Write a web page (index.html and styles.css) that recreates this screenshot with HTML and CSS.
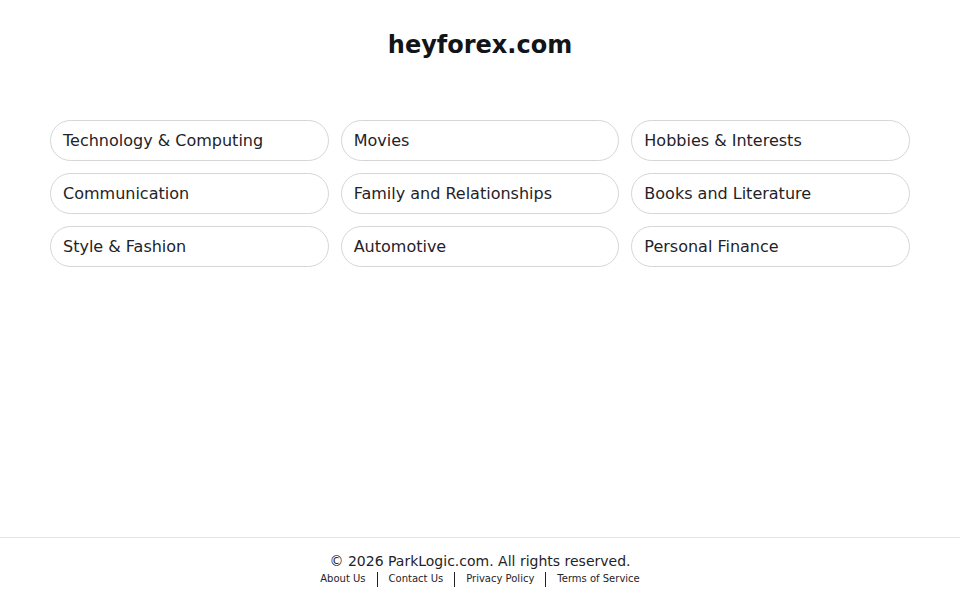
FILE: index.html
```html
<!DOCTYPE html>
<html lang="en">
<head>
<meta charset="utf-8">
<title>heyforex.com</title>
<link rel="stylesheet" href="styles.css">
</head>
<body>
<div class="page">
  <main class="main">
    <h1 class="title">heyforex.com</h1>
    <div class="grid">
      <a class="pill" href="#">Technology &amp; Computing</a>
      <a class="pill" href="#">Movies</a>
      <a class="pill" href="#">Hobbies &amp; Interests</a>
      <a class="pill" href="#">Communication</a>
      <a class="pill" href="#">Family and Relationships</a>
      <a class="pill" href="#">Books and Literature</a>
      <a class="pill" href="#">Style &amp; Fashion</a>
      <a class="pill" href="#">Automotive</a>
      <a class="pill" href="#">Personal Finance</a>
    </div>
  </main>
  <footer class="footer">
    <div class="copy">© 2026 ParkLogic.com. All rights reserved.</div>
    <nav class="links">
      <a href="#">About Us</a>
      <span class="sep"></span>
      <a href="#">Contact Us</a>
      <span class="sep"></span>
      <a href="#">Privacy Policy</a>
      <span class="sep"></span>
      <a href="#">Terms of Service</a>
    </nav>
  </footer>
</div>
</body>
</html>
```

FILE: styles.css
```css
html, body {
  margin: 0;
  padding: 0;
  background: #ffffff;
}
body {
  font-family: "DejaVu Sans", sans-serif;
  color: #1f2328;
}
.page {
  min-height: 100vh;
  display: flex;
  flex-direction: column;
}
.main {
  flex: 1;
  padding: 29px 50px 0;
}
.title {
  margin: 0;
  font-size: 24px;
  line-height: 32px;
  font-weight: bold;
  text-align: center;
  color: #111418;
}
.grid {
  margin-top: 59px;
  display: grid;
  grid-template-columns: repeat(3, 1fr);
  gap: 12px;
}
.pill {
  display: block;
  border: 1px solid #d6d6d6;
  border-radius: 21px;
  padding: 10px 12px;
  font-size: 16px;
  line-height: 19px;
  color: #1f2328;
  text-decoration: none;
}
.footer {
  border-top: 1px solid #e5e5e5;
  padding: 14px 0 13px;
  text-align: center;
}
.copy {
  font-size: 14px;
  line-height: 18px;
  color: #1f2328;
}
.links {
  margin-top: 1px;
  display: flex;
  justify-content: center;
  align-items: center;
  gap: 11px;
  font-size: 10px;
  line-height: 16px;
}
.links a {
  color: #1f2328;
  text-decoration: none;
}
.sep {
  display: block;
  width: 1px;
  height: 15px;
  background: #1f2328;
}
```
